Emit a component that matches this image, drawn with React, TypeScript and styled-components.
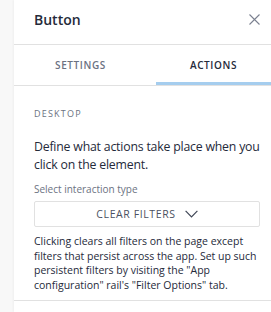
import React, { FC } from 'react';
import styled, { createGlobalStyle } from 'styled-components';

const GlobalStyle = createGlobalStyle`
  html, body {
    margin: 0;
    padding: 0;
    background: #f8f8f8;
  }
  body {
    font-family: 'Open Sans', 'Noto Sans', sans-serif;
    color: #252a3a;
  }
`;

const App: FC = () => {
  return (
    <>
      <GlobalStyle />
      <Page>
        <Rail />
        <Panel>
          <Header>
            <Title>Button</Title>
            <CloseButton aria-label='Close'>
              <svg width='11' height='11' viewBox='0 0 11 11'>
                <path d='M0.5 0.5 L10.5 10.5 M10.5 0.5 L0.5 10.5' stroke='#7b8190' strokeWidth='1.1' fill='none' />
              </svg>
            </CloseButton>
          </Header>
          <Tabs>
            <Tab>SETTINGS</Tab>
            <Tab active>ACTIONS</Tab>
          </Tabs>
          <Section>
            <SectionLabel>DESKTOP</SectionLabel>
            <Intro>Define what actions take place when you click on the element.</Intro>
            <FieldLabel>Select interaction type</FieldLabel>
            <Select>
              CLEAR FILTERS
              <svg width='13' height='8' viewBox='0 0 13 8'>
                <path d='M0.6 0.8 L6.5 6.8 L12.4 0.8' stroke='#3f4656' strokeWidth='1.2' fill='none' />
              </svg>
            </Select>
            <Help>
              Clicking clears all filters on the page except filters that persist across the app. Set up such
              persistent filters by visiting the "App configuration" rail's "Filter Options" tab.
            </Help>
          </Section>
        </Panel>
      </Page>
    </>
  );
};

export default App;

const Page = styled.div`
  display: flex;
  width: 280px;
  height: 312px;
  overflow: hidden;
`;

const Rail = styled.div`
  width: 14px;
  flex-shrink: 0;
  background: #f8f8f8;
`;

const Panel = styled.div`
  width: 266px;
  flex-shrink: 0;
  background: #fff;
  box-shadow: -1px 0 2px rgba(0, 0, 0, 0.04);
`;

const Header = styled.div`
  height: 44px;
  display: flex;
  align-items: center;
  justify-content: space-between;
  padding: 0 20px;
  border-bottom: 1px solid #e1e1e1;
`;

const Title = styled.div`
  font-size: 14px;
  font-weight: 600;
  color: #252a3a;
  margin-top: -6px;
`;

const CloseButton = styled.div`
  display: flex;
  margin-top: -6px;
`;

const Tabs = styled.div`
  display: flex;
  height: 40px;
  border-bottom: 1px solid #e1e1e1;
`;

const Tab = styled.div<{ active?: boolean }>`
  flex: 1;
  display: flex;
  align-items: center;
  justify-content: center;
  font-size: 10px;
  letter-spacing: 0.6px;
  font-weight: 600;
  color: ${(p) => (p.active ? '#252a3a' : '#6b7282')};
  border-bottom: 3px solid ${(p) => (p.active ? '#a5cdee' : 'transparent')};
  margin: 0 9px;
  padding-top: 2px;
  box-sizing: border-box;
`;

const Section = styled.div`
  padding: 22px 20px 0 20px;
  height: 215px;
  box-sizing: border-box;
  border-bottom: 1px solid #e1e1e1;
`;

const SectionLabel = styled.div`
  font-size: 9px;
  letter-spacing: 1.2px;
  color: #6b7282;
  line-height: 12px;
`;

const Intro = styled.div`
  margin-top: 18px;
  font-size: 12.3px;
  letter-spacing: -0.2px;
  line-height: 18px;
  color: #252a3a;
`;

const FieldLabel = styled.div`
  margin-top: 8px;
  font-size: 10px;
  line-height: 14px;
  color: #6b7282;
`;

const Select = styled.div`
  margin-top: 5px;
  height: 26px;
  box-sizing: border-box;
  border: 1px solid #e1e1e1;
  border-radius: 2px;
  display: flex;
  align-items: center;
  justify-content: center;
  gap: 9px;
  font-size: 10.5px;
  letter-spacing: 0.6px;
  color: #4a5161;
`;

const Help = styled.div`
  margin-top: 7px;
  font-size: 10.5px;
  line-height: 14.5px;
  color: #252a3a;
`;
